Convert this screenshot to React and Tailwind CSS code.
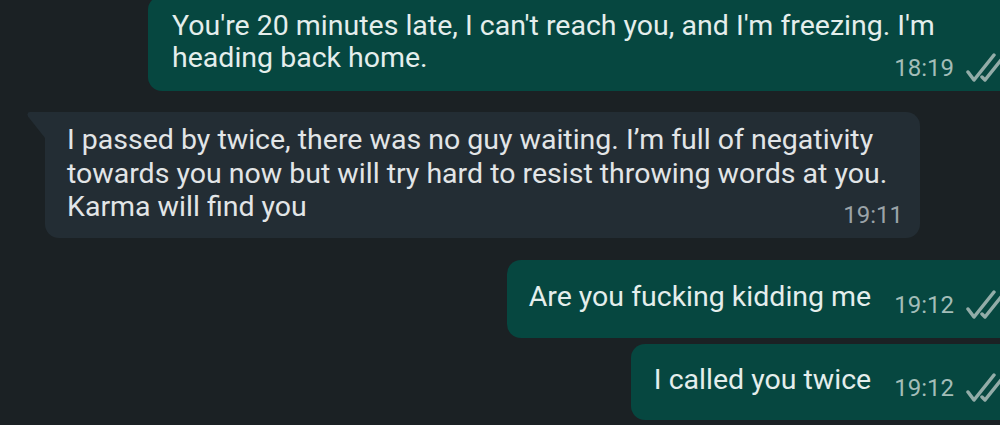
const font = { fontFamily: 'Roboto, "Noto Sans", sans-serif' };

function Ticks() {
  return (
    <svg width="42" height="30" viewBox="0 0 42 30" fill="none" className="shrink-0">
      <path d="M3 20 L9 28 L29 3" stroke="#93aca8" strokeWidth="3.5" strokeLinecap="round" strokeLinejoin="round" />
      <path d="M17 25 L20 28 L40 3" stroke="#93aca8" strokeWidth="3.5" strokeLinecap="round" strokeLinejoin="round" />
    </svg>
  );
}

function OutTime({ time, drop }) {
  return (
    <div className={`flex items-end shrink-0 ${drop}`}>
      <span className="text-[24px] leading-[24px] text-[#a3bdb8]">{time}</span>
      <span className="ml-[11px] mb-[-2px]">
        <Ticks />
      </span>
    </div>
  );
}

export default function App() {
  return (
    <div
      className="h-[425px] w-full overflow-hidden bg-[#1b2124] flex flex-col text-[28.5px]"
      style={font}
    >
      {/* outgoing, two lines */}
      <div className="mt-[-4px] ml-[148px] mr-[-16px] bg-[#064740] rounded-[14px] pl-[24px] pr-[9px] pt-[14px] pb-[17px] text-[#e4eeec] leading-[32px]">
        <div>You're 20 minutes late, I can't reach you, and I'm freezing. I'm</div>
        <div className="flex items-end justify-between">
          <span>heading back home.</span>
          <OutTime time="18:19" drop="mb-[-6px]" />
        </div>
      </div>

      {/* incoming */}
      <div className="mt-[21px] ml-[27px] flex items-start">
        <svg width="18" height="26" viewBox="0 0 18 26" className="shrink-0">
          <path d="M3 0 H18 V26 L1 4.5 Q-0.5 0 3 0Z" fill="#232d34" />
        </svg>
        <div className="w-[875px] bg-[#232d34] rounded-[14px] rounded-tl-none pl-[22px] pr-[17px] pt-[11px] pb-[14px] text-[#e2e5e7] leading-[33.5px]">
          <div>I passed by twice, there was no guy waiting. I’m full of negativity</div>
          <div>towards you now but will try hard to resist throwing words at you.</div>
          <div className="flex items-end justify-between">
            <span>Karma will find you</span>
            <span className="text-[24px] leading-[24px] text-[#9ba3a8] mb-[-3px]">19:11</span>
          </div>
        </div>
      </div>

      {/* outgoing, single line */}
      <div className="mt-[22px] self-end mr-[-16px] bg-[#064740] rounded-[14px] pl-[22px] pr-[9px] pt-[20px] pb-[25px] text-[#e4eeec] leading-[33px] flex items-end">
        <span>Are you fucking kidding me</span>
        <span className="ml-[23px]">
          <OutTime time="19:12" drop="mb-[-4px]" />
        </span>
      </div>
      <div className="mt-[6px] self-end mr-[-16px] bg-[#064740] rounded-[14px] pl-[23px] pr-[9px] pt-[19px] pb-[24px] text-[#e4eeec] leading-[33px] flex items-end">
        <span>I called you twice</span>
        <span className="ml-[23px]">
          <OutTime time="19:12" drop="mb-[-4px]" />
        </span>
      </div>
    </div>
  );
}
